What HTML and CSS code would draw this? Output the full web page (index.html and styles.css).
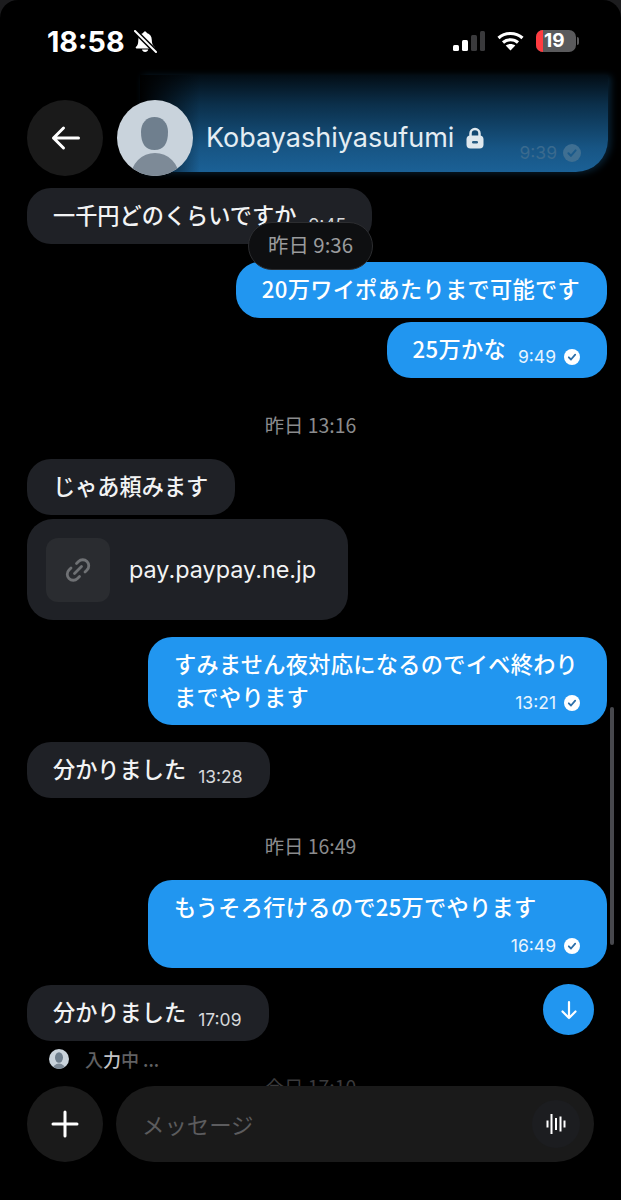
FILE: index.html
```html
<!DOCTYPE html>
<html lang="ja">
<head>
    <meta charset="UTF-8">
    <title>Chat</title>
    <link rel="stylesheet" href="styles.css">
</head>
<body>
<div class="phone">
    <div class="status">
        <div class="status-left">
            <span class="clock">18:58</span>
            <svg class="bell" width="23" height="23" viewBox="0 0 23 23"><path fill="#fff" d="M11 1.500c1 0 1.700.7 1.800 1.600 3.200.8 5 3.400 5 6.900 0 3.500.9 5.400 2.700 7.100.5.600.1 1.400-.6 1.400H2.500c-.7 0-1.100-.8-.6-1.400C3.700 15.400 4.300 13.500 4.300 10c0-3.500 1.800-6.100 4.900-6.900C9.300 2.200 10 1.500 11 1.500zM8 19.500h6.200c-.2 1.500-1.500 2.500-3.100 2.500S8.200 21 8 19.500z"/><path stroke="#000" stroke-width="5" d="M0 0l23 23"/><path stroke="#fff" stroke-width="2" stroke-linecap="round" d="M1 1l21 21"/></svg>
        </div>
        <div class="status-right">
            <svg width="32" height="20" viewBox="0 0 32 20"><rect x="0" y="14" width="6" height="6" rx="1.500" fill="#fff"/><rect x="9" y="9" width="6" height="11" rx="1.500" fill="#fff"/><rect x="18" y="4" width="6" height="16" rx="1.500" fill="#3a3a3c"/><rect x="27" y="0" width="5" height="20" rx="1.500" fill="#3a3a3c"/></svg>
            <svg class="wifi" width="27" height="20" viewBox="0 0 27 20"><g fill="none" stroke="#fff" stroke-width="3.200"><path d="M1.500 7c6.800-6 17.200-6 24 0"/><path d="M6 11.500c4.300-3.700 10.700-3.700 15 0"/></g><path fill="#fff" d="M13.500 19.500l-4.800-4.900c2.800-2 6.800-2 9.600 0z"/></svg>
            <div class="battery"><span class="battery-red"></span><span class="battery-num">19</span></div>
            <span class="battery-tip"></span>
        </div>
    </div>

    <div class="glow">
        <span class="glow-time">9:39</span>
        <svg width="18" height="18" viewBox="0 0 16 16"><circle cx="8" cy="8" r="8" fill="#3f6f92"/><path fill="none" stroke="#1b5a8a" stroke-width="1.800" stroke-linecap="round" stroke-linejoin="round" d="M4.800 8.300l2.200 2.200 4.200-4.800"/></svg>
    </div>

    <div class="header">
        <div class="round-btn">
            <svg width="30" height="26" viewBox="0 0 30 26"><path fill="none" stroke="#fff" stroke-width="3" stroke-linecap="round" stroke-linejoin="round" d="M28.500 13H3.500M13.500 3L3.500 13l10 10"/></svg>
        </div>
        <div class="avatar">
            <svg width="76" height="76" viewBox="0 0 76 76"><path fill="#6f7f8e" d="M37.500 17c8 0 13.500 6 13.500 15 0 11-4 18-13.500 18S24 43 24 32c0-9 5.500-15 13.500-15z"/><circle cx="38" cy="77" r="24" fill="#7d8a97"/></svg>
        </div>
        <div class="peer">
            <span class="peer-name">Kobayashiyasufumi</span>
            <svg width="18" height="22" viewBox="0 0 18 22"><path fill="none" stroke="#dfe8ee" stroke-width="2.500" d="M4.500 10V6.500a4.500 4.500 0 0 1 9 0V10"/><rect x="0.500" y="8.500" width="17" height="13" rx="4" fill="#dfe8ee"/><rect x="6" y="14" width="6" height="2.500" rx="1.200" fill="#2a5f85"/></svg>
        </div>
    </div>

    <div class="chat">
        <div class="msg in first"><span class="text">一千円どのくらいですか</span><span class="time clipped">9:45</span></div>
        <div class="msg out second"><span class="text">20万ワイポあたりまで可能です</span></div>
        <div class="msg out"><span class="text">25万かな</span><span class="time">9:49</span><span class="check"><svg width="16" height="16" viewBox="0 0 16 16"><circle cx="8" cy="8" r="8" fill="#fff"/><path fill="none" stroke="#2b6ea8" stroke-width="1.800" stroke-linecap="round" stroke-linejoin="round" d="M4.800 8.300l2.200 2.200 4.200-4.800"/></svg></span></div>

        <div class="date">昨日 13:16</div>

        <div class="msg in"><span class="text">じゃあ頼みます</span></div>
        <div class="link">
            <div class="link-icon">
                <svg width="30" height="30" viewBox="0 0 30 30"><g fill="none" stroke="#6f7174" stroke-width="2.800" stroke-linecap="round"><path d="M11.500 18.500l7-7"/><path d="M13.500 8.500l2-2a6 6 0 0 1 8.500 8.500l-2 2"/><path d="M16.500 21.500l-2 2a6 6 0 0 1-8.500-8.500l2-2"/></g></svg>
            </div>
            <span class="link-text">pay.paypay.ne.jp</span>
        </div>

        <div class="msg out block">
            <div class="text">すみません夜対応になるのでイベ終わりまでやります</div>
            <div class="meta"><span class="time">13:21</span><span class="check"><svg width="16" height="16" viewBox="0 0 16 16"><circle cx="8" cy="8" r="8" fill="#fff"/><path fill="none" stroke="#2b6ea8" stroke-width="1.800" stroke-linecap="round" stroke-linejoin="round" d="M4.800 8.300l2.200 2.200 4.200-4.800"/></svg></span></div>
        </div>

        <div class="msg in gap-top"><span class="text">分かりました</span><span class="time">13:28</span></div>

        <div class="date date-late">昨日 16:49</div>

        <div class="msg out block">
            <div class="text">もうそろ行けるので25万でやります</div>
            <div class="meta"><span class="time">16:49</span><span class="check"><svg width="16" height="16" viewBox="0 0 16 16"><circle cx="8" cy="8" r="8" fill="#fff"/><path fill="none" stroke="#2b6ea8" stroke-width="1.800" stroke-linecap="round" stroke-linejoin="round" d="M4.800 8.300l2.200 2.200 4.200-4.800"/></svg></span></div>
        </div>

        <div class="msg in gap-top"><span class="text">分かりました</span><span class="time">17:09</span></div>

        <div class="typing">
            <svg width="20" height="20" viewBox="0 0 20 20"><defs><clipPath id="tc"><circle cx="10" cy="10" r="10"/></clipPath></defs><circle cx="10" cy="10" r="10" fill="#c9d3dc"/><g clip-path="url(#tc)"><ellipse cx="10" cy="8.500" rx="4" ry="5.200" fill="#6f7f8e"/><circle cx="10" cy="21" r="6.500" fill="#7d8a97"/></g></svg>
            <span class="typing-text">入<span class="typing-lit">力</span>中 ...</span>
        </div>
        <div class="date hidden-date">今日 17:10</div>
    </div>

    <div class="date-pill">昨日 9:36</div>
    <div class="scrollbar"></div>
    <div class="down-btn">
        <svg width="18" height="20" viewBox="0 0 18 20"><path fill="none" stroke="#fff" stroke-width="2.200" stroke-linecap="round" stroke-linejoin="round" d="M9 2v16M2.500 11.500L9 18l6.500-6.500"/></svg>
    </div>

    <div class="composer">
        <div class="round-btn">
            <svg width="28" height="28" viewBox="0 0 28 28"><path stroke="#fff" stroke-width="3" stroke-linecap="round" d="M14 2v24M2 14h24"/></svg>
        </div>
        <div class="input">
            <span class="placeholder">メッセージ</span>
            <div class="voice">
                <svg width="22" height="22" viewBox="0 0 22 22"><path stroke="#fff" stroke-width="2" d="M2.500 7.500v7M6.500 1v20M11 5v12M15.500 3.500v15M19.500 7.500v7"/></svg>
            </div>
        </div>
    </div>
</div>
</body>
</html>
```
FILE: styles.css
```css
*{
    margin:0;
    padding:0;
    box-sizing:border-box;
}
body{
    background:#1c1c1e;
    font-family:"Noto Sans CJK JP","Noto Sans",sans-serif;
}
.phone{
    position:relative;
    width:621px;
    height:1200px;
    overflow:hidden;
    background:#000;
    border-radius:18px 18px 0 0;
    color:#f2f3f4;
}

/* status bar */
.status{
    display:flex;
    justify-content:space-between;
    align-items:center;
    height:82px;
    padding:0 42px 0 47px;
}
.status-left,.status-right{
    display:flex;
    align-items:center;
}
.clock{
    font-family:Inter,"Liberation Sans",sans-serif;
    font-size:28.7px;
    font-weight:700;
    color:#fff;
    margin-right:9px;
}
.wifi{
    margin:0 12px 0 12px;
}
.battery{
    position:relative;
    width:40px;
    height:22px;
    background:#5a5a5c;
    border-radius:7px;
    overflow:hidden;
}
.battery-red{
    position:absolute;
    left:0;
    top:0;
    bottom:0;
    width:7px;
    background:#ff3b40;
}
.battery-num{
    position:absolute;
    left:8px;
    top:0;
    font-family:Inter,"Liberation Sans",sans-serif;
    font-size:19px;
    font-weight:700;
    line-height:22px;
    color:#fff;
}
.battery-tip{
    width:2px;
    height:8px;
    margin-left:1px;
    background:#5a5a5c;
    border-radius:0 2px 2px 0;
}

/* header */
.glow{
    position:absolute;
    left:140px;
    top:75px;
    width:468px;
    height:97px;
    padding:0 27px 6px 0;
    display:flex;
    align-items:flex-end;
    justify-content:flex-end;
    gap:6px;
    background:
        linear-gradient(90deg,#000 0,rgba(0,0,0,0) 60px),
        linear-gradient(180deg,#030d15 0,#0b2f4a 30%,#175584 75%,#1b6196 100%);
    border-radius:0 0 32px 0;
    box-shadow:3px 1px 7px rgba(27,97,150,.35);
}
.glow-time{
    font-family:Inter,"Liberation Sans",sans-serif;
    font-size:17.5px;
    line-height:26px;
    color:#3a6a8e;
}
.glow svg{
    margin-bottom:4px;
}
.header{
    position:relative;
    display:flex;
    align-items:center;
    gap:14px;
    height:77px;
    margin-top:17px;
    padding-left:27px;
}
.round-btn{
    display:flex;
    align-items:center;
    justify-content:center;
    flex:none;
    width:76px;
    height:76px;
    border-radius:50%;
    background:#1a1a1a;
}
.avatar{
    flex:none;
    width:76px;
    height:76px;
    border-radius:50%;
    overflow:hidden;
    background:#c9d3dc;
}
.peer{
    display:flex;
    align-items:center;
    gap:12px;
    margin-left:-1px;
}
.peer-name{
    font-family:Inter,"Liberation Sans",sans-serif;
    font-size:27px;
    color:#e4edf3;
}

/* messages */
.chat{
    display:flex;
    flex-direction:column;
    align-items:flex-start;
    gap:4px;
    padding:12px 14px 0 27px;
}
.msg{
    display:flex;
    align-items:center;
    min-height:56px;
    padding:0 27px 0 26px;
    border-radius:24px;
    font-size:22.2px;
    font-weight:500;
    line-height:33px;
    white-space:nowrap;
}
.msg .text{
    margin-top:-4px;
}
.in{
    background:#1f2126;
}
.out{
    align-self:flex-end;
    background:#2196f0;
    color:#fff;
    letter-spacing:.3px;
}
.first{
    width:345px;
}
.second{
    margin-top:14px;
}
.gap-top{
    margin-top:13px;
}
.time{
    margin-left:12px;
    margin-top:13px;
    font-family:Inter,"Liberation Sans",sans-serif;
    font-size:17.5px;
    font-weight:400;
    letter-spacing:0;
    line-height:24px;
    color:#d6d8da;
    white-space:nowrap;
}
.out .time{
    color:#e8f4fe;
}
.clipped{
    margin-top:18px;
}
.check{
    display:flex;
    margin-left:8px;
    margin-top:13px;
}
.block{
    position:relative;
    display:block;
    width:459px;
    height:88px;
    padding:10px 27px 0 26px;
    white-space:normal;
}
.msg.block .text{
    margin:0;
}
.meta{
    position:absolute;
    right:27px;
    bottom:10px;
    display:flex;
    align-items:center;
}
.meta .time,.meta .check{
    margin-top:0;
}
.date{
    align-self:center;
    margin:30px 13px 17px 0;
    font-size:19.4px;
    line-height:26px;
    color:#8b8c8e;
}
.date-late{
    margin-top:31px;
}
.link{
    display:flex;
    align-items:center;
    gap:19px;
    width:321px;
    height:101px;
    margin-bottom:13px;
    padding-left:19px;
    border-radius:26px;
    background:#1f2126;
}
.link-icon{
    display:flex;
    align-items:center;
    justify-content:center;
    width:64px;
    height:64px;
    border-radius:12px;
    background:#2a2c30;
}
.link-text{
    font-family:Inter,"Liberation Sans",sans-serif;
    font-size:23.4px;
}
.typing{
    display:flex;
    align-items:center;
    gap:16px;
    margin:1px 0 0 22px;
    height:26px;
}
.typing-text{
    font-size:18px;
    font-weight:500;
    color:#616163;
}
.typing-lit{
    color:#c4c4c6;
}
.date.hidden-date{
    margin:-2px 13px 0 0;
    color:#3a3a3c;
}

/* things lying over the list */
.date-pill{
    position:absolute;
    left:248px;
    top:222px;
    width:125px;
    height:48px;
    border:1px solid #2c2d30;
    border-radius:24px;
    background:#0e0f11;
    font-size:20.4px;
    line-height:43px;
    text-align:center;
    color:#9a9b9d;
}
.scrollbar{
    position:absolute;
    left:610px;
    top:707px;
    width:4px;
    height:238px;
    border-radius:2px;
    background:#47484d;
}
.down-btn{
    position:absolute;
    left:543px;
    top:984px;
    display:flex;
    align-items:center;
    justify-content:center;
    width:51px;
    height:51px;
    border-radius:50%;
    background:#2196f0;
}

/* bottom bar */
.composer{
    position:absolute;
    left:0;
    top:1086px;
    right:0;
    display:flex;
    gap:13px;
    height:114px;
    padding:0 27px;
    background:#000;
}
.input{
    display:flex;
    flex:1;
    align-items:center;
    justify-content:space-between;
    height:76px;
    padding:0 14px 0 26px;
    border-radius:38px;
    background:#1a1a1a;
}
.placeholder{
    font-size:22.4px;
    color:#5c5c5e;
}
.voice{
    display:flex;
    align-items:center;
    justify-content:center;
    width:48px;
    height:48px;
    border-radius:50%;
    background:#1c1d20;
}
```
